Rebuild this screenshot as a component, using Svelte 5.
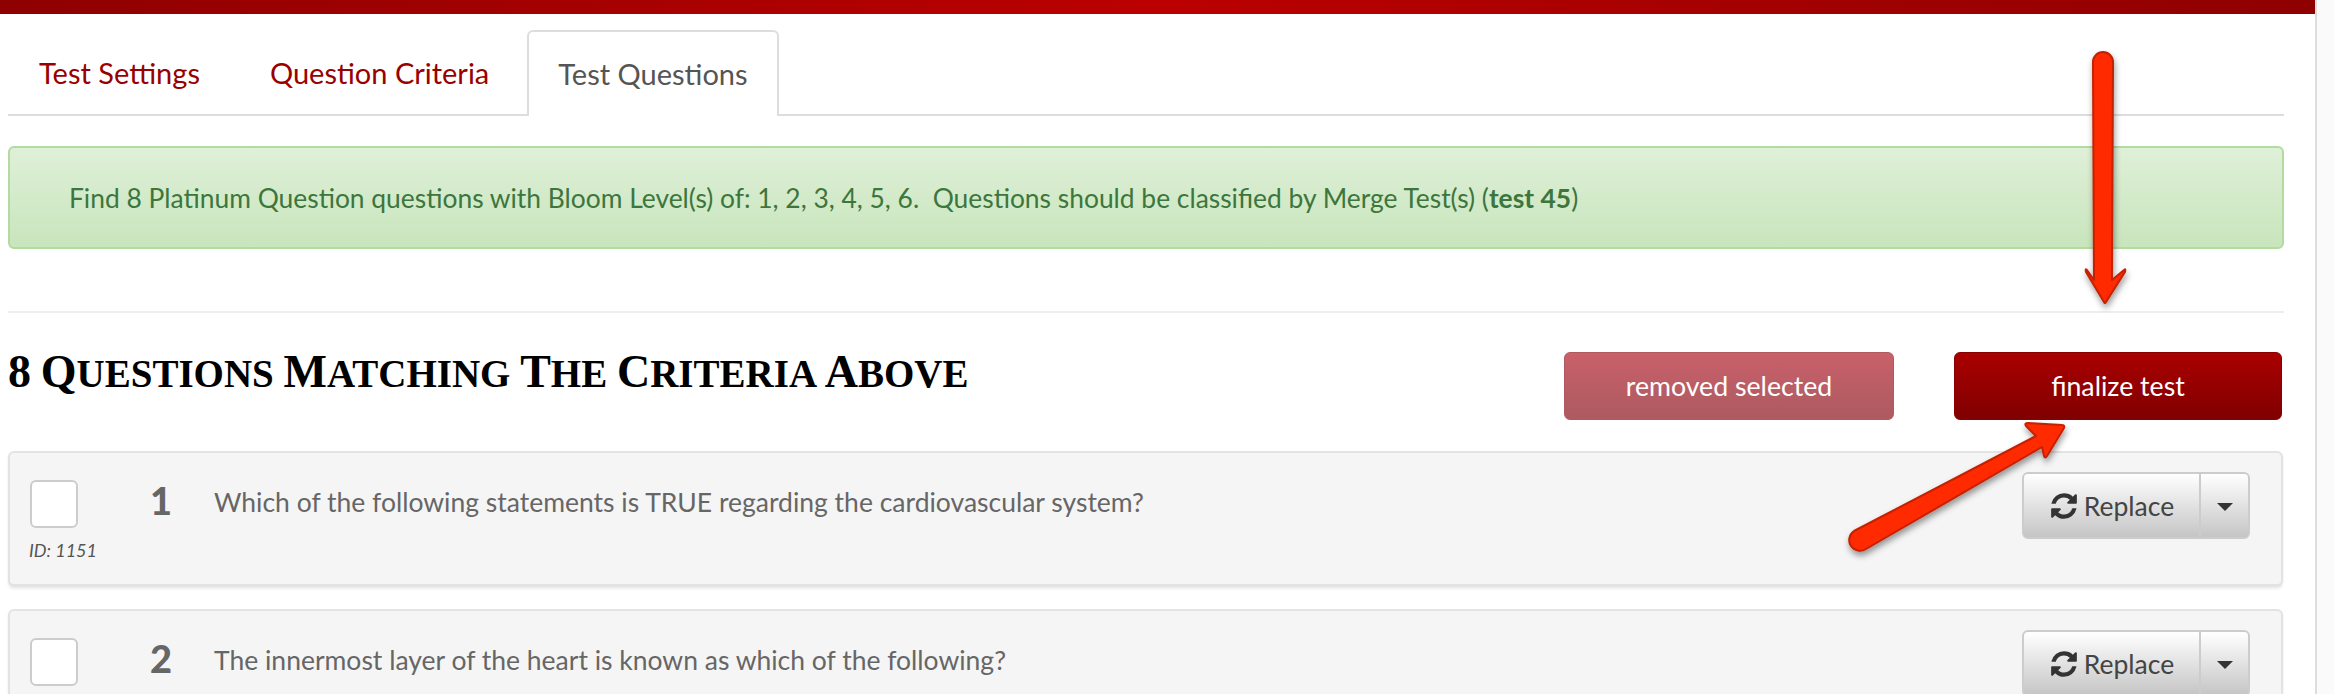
<script>
	let questions = [
		{ num: 1, id: 1151, text: 'Which of the following statements is TRUE regarding the cardiovascular system?' },
		{ num: 2, text: 'The innermost layer of the heart is known as which of the following?' }
	];
	let title = ['8', 'Questions', 'Matching', 'The', 'Criteria', 'Above'];
</script>

<div class="viewport">
	<div class="page">
		<div class="topbar"></div>
		<div class="content">
			<nav class="tabs">
				<span class="tab">Test Settings</span>
				<span class="tab">Question Criteria</span>
				<span class="tab active">Test Questions</span>
			</nav>

			<div class="alert">
				Find 8 Platinum Question questions with Bloom Level(s) of: 1, 2, 3, 4, 5, 6.&nbsp; Questions should be classified by Merge Test(s) (<b>test 45</b>)
			</div>

			<div class="divider"></div>

			<div class="toolbar">
				<h2>{#each title as word, i}<span class="cap">{word[0]}</span>{word.slice(1)}{i < title.length - 1 ? ' ' : ''}{/each}</h2>
				<div class="actions">
					<button class="btn removed">removed selected</button>
					<button class="btn finalize">finalize test</button>
				</div>
			</div>

			{#each questions as q}
				<div class="card">
					<div class="select">
						<div class="check"></div>
						{#if q.id}
							<i>ID: {q.id}</i>
						{/if}
					</div>
					<div class="num">{q.num}</div>
					<div class="text">{q.text}</div>
					<div class="split">
						<button class="main">
							<svg viewBox="0 0 1792 1792" width="30" height="30">
								<path fill="#333" d="M1639 1056q0 5-1 7-64 268-268 434.5t-478 166.5q-146 0-282.5-55t-243.5-157l-129 129q-19 19-45 19t-45-19-19-45v-448q0-26 19-45t45-19h448q26 0 45 19t19 45-19 45l-137 137q71 66 161 102t187 36q134 0 250-65t186-179q11-17 53-117 8-23 30-23h192q13 0 22.5 9.5t9.5 22.5zm25-800v448q0 26-19 45t-45 19h-448q-26 0-45-19t-19-45 19-45l138-138q-148-137-349-137-134 0-250 65t-186 179q-11 17-53 117-8 23-30 23h-199q-13 0-22.5-9.5t-9.5-22.5v-7q65-268 270-434.5t480-166.5q146 0 284 55.5t245 156.5l130-129q19-19 45-19t45 19 19 45z" />
							</svg>
							Replace
						</button>
						<button class="caret" aria-label="More"><span></span></button>
					</div>
				</div>
			{/each}
		</div>
	</div>

	<!-- annotation arrows drawn on top of the screenshot -->
	<svg class="arrows" width="2334" height="694" viewBox="0 0 2334 694">
		<defs>
			<filter id="shadow" x="-30%" y="-30%" width="160%" height="160%">
				<feDropShadow dx="1" dy="4" stdDeviation="3" flood-color="#000" flood-opacity="0.4" />
			</filter>
		</defs>
		<g filter="url(#shadow)" fill="#ff2a00" stroke="#c42000" stroke-width="2" stroke-linejoin="round">
			<path d="M2093 62 a10 10 0 0 1 20 0 L2112 280 L2124 270 Q2126 268 2125 272 L2106 302 Q2105 304 2104 302 L2086 272 Q2085 268 2087 270 L2094 280 Z" />
			<path d="M1854 531 L2036 436 L2026 426 Q2024 423 2028 423 L2062 425 Q2065 425 2064 428 L2047 456 Q2045 459 2044 456 L2042 447 L1866 549 A10.5 10.5 0 0 1 1854 531 Z" />
		</g>
	</svg>
</div>

<style>
	:global(body) {
		margin: 0;
		background: #fff;
	}
	.viewport {
		position: relative;
		width: 2334px;
		height: 694px;
		overflow: hidden;
		background: #fafafa;
		font-family: 'Lato', 'Liberation Sans', sans-serif;
	}
	.page {
		width: 2315px;
		height: 694px;
		background: #fff;
		border-right: 2px solid #ddd;
		box-sizing: content-box;
	}
	.topbar {
		height: 14px;
		background: linear-gradient(to right, #8f0000, #bb0000 50%, #8f0000);
	}
	.content {
		padding: 16px 31px 0 8px;
	}
	.tabs {
		display: flex;
		height: 84px;
		gap: 8px;
		border-bottom: 2px solid #ddd;
	}
	.tab {
		display: flex;
		align-items: center;
		padding: 0 29px 2px;
		height: 84px;
		box-sizing: border-box;
		font-size: 29px;
		color: #990000;
		border: 2px solid transparent;
		border-bottom: 0;
	}
	.tab.active {
		height: 86px;
		margin-left: -1px;
		background: #fff;
		color: #555;
		border-color: #ddd;
		border-radius: 6px 6px 0 0;
	}
	.alert {
		margin-top: 30px;
		height: 103px;
		box-sizing: border-box;
		padding-left: 59px;
		display: flex;
		align-items: center;
		white-space: pre-wrap;
		font-size: 26.4px;
		color: #3c763d;
		border: 2px solid #b2dba1;
		border-radius: 6px;
		background: linear-gradient(to bottom, #dff0d8, #c8e5bc);
	}
	.divider {
		margin-top: 62px;
		height: 2px;
		background: #eee;
	}
	.toolbar {
		display: flex;
		justify-content: space-between;
		margin-top: 39px;
		height: 68px;
	}
	h2 {
		margin: 0;
		font-family: 'Liberation Serif', serif;
		text-transform: uppercase;
		font-weight: 700;
		font-size: 39px;
		line-height: 40px;
		color: #000;
		white-space: nowrap;
	}
	.cap {
		font-size: 46px;
	}
	.actions {
		display: flex;
		gap: 60px;
		padding-right: 2px;
	}
	.btn {
		height: 68px;
		border-radius: 6px;
		font-family: inherit;
		font-size: 26.7px;
		color: #fff;
		border: 1px solid #8a0000;
		padding: 0;
	}
	.removed {
		width: 330px;
		border-color: #b0595e;
		background: linear-gradient(to bottom, #c9606a, #ad5a60);
	}
	.finalize {
		width: 328px;
		background: linear-gradient(to bottom, #aa0000, #800000);
	}
	.card {
		display: flex;
		align-items: flex-start;
		height: 136px;
		box-sizing: border-box;
		margin-top: 31px;
		margin-right: 1px;
		background: #f5f5f5;
		border: 2px solid #e3e3e3;
		border-bottom-width: 3px;
		border-radius: 6px;
		box-shadow: 0 2px 3px rgba(0, 0, 0, 0.08);
		position: relative;
	}
	.card + .card {
		margin-top: 22px;
	}
	.select {
		width: 120px;
		padding: 27px 0 0 20px;
		box-sizing: border-box;
		flex: none;
	}
	.check {
		width: 48px;
		height: 48px;
		box-sizing: border-box;
		background: #fff;
		border: 2px solid #ccc;
		border-radius: 6px;
	}
	.select i {
		display: block;
		margin: 11px 0 0 -1px;
		font-size: 18px;
		color: #555;
		white-space: nowrap;
	}
	.num {
		width: 84px;
		flex: none;
		padding: 24px 0 0 20px;
		box-sizing: border-box;
		font-size: 38px;
		font-weight: 900;
		color: #666;
	}
	.text {
		flex: 1;
		padding-top: 33px;
		font-size: 26.5px;
		color: #666;
	}
	.split {
		display: flex;
		height: 67px;
		margin: 19px 31px 0 0;
		flex: none;
	}
	.split button {
		height: 67px;
		background: linear-gradient(to bottom, #fff, #c5c5c5);
		border: 2px solid #ccc;
		padding: 0;
		font-family: inherit;
		color: #444;
	}
	.main {
		width: 179px;
		display: flex;
		align-items: center;
		justify-content: center;
		gap: 5px;
		font-size: 26.5px;
		border-radius: 6px 0 0 6px;
	}
	.caret {
		width: 49px;
		border-left: 0 !important;
		border-radius: 0 6px 6px 0;
	}
	.caret span {
		display: inline-block;
		margin-top: 6px;
		border-top: 8px solid #333;
		border-left: 8px solid transparent;
		border-right: 8px solid transparent;
	}
	.arrows {
		position: absolute;
		left: 0;
		top: 0;
		pointer-events: none;
	}
</style>
